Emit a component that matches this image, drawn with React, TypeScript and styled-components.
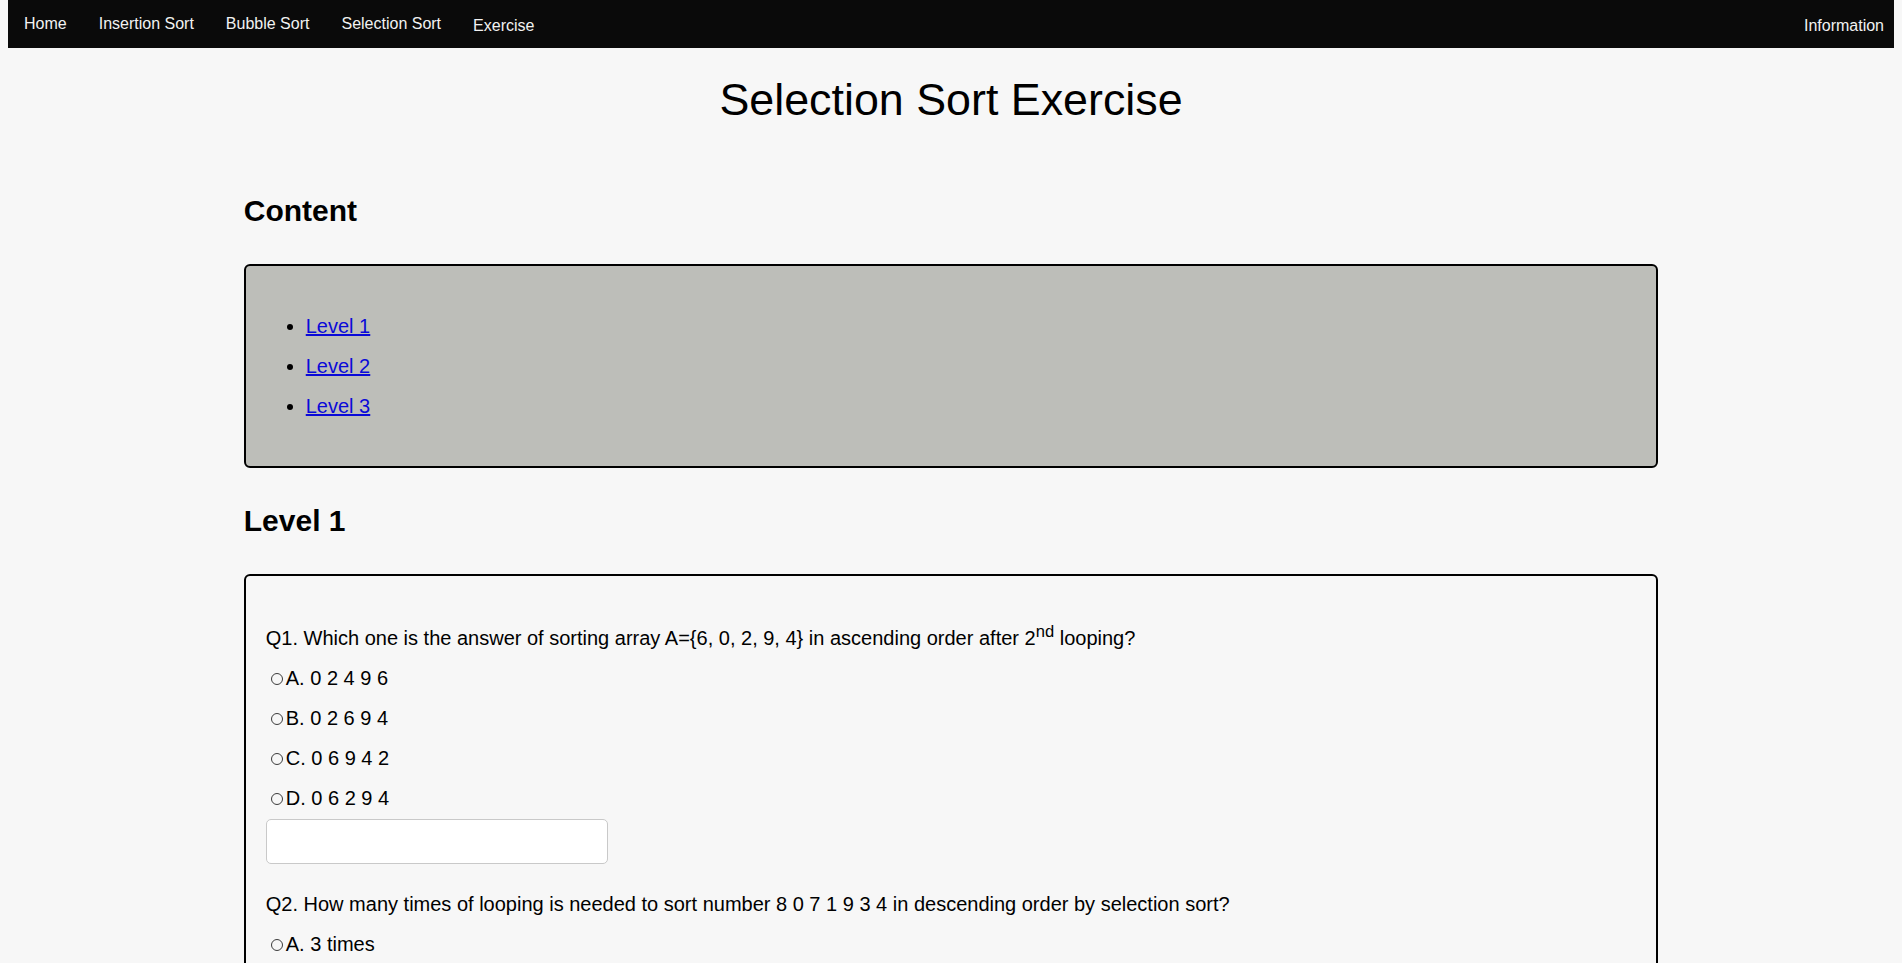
import React from "react";
import styled, { createGlobalStyle } from "styled-components";

const GlobalStyle = createGlobalStyle`
  html, body {
    background: #f7f7f7;
  }
  body {
    margin: 0 8px;
    font-family: "Liberation Sans", Arial, sans-serif;
    color: #000;
  }
`;

const TopNav = styled.nav`
  display: flex;
  align-items: stretch;
  height: 48px;
  margin-right: -8px;
  background: #0a0a0a;
`;

const NavLink = styled.a<{ $low?: boolean; $right?: boolean }>`
  display: flex;
  align-items: center;
  padding: ${(p) => (p.$low ? "4px" : "0")} ${(p) => (p.$right ? "18px" : "16px")} 0 16px;
  margin-left: ${(p) => (p.$right ? "auto" : "0")};
  font-size: 16px;
  color: #f2f2f2;
  text-decoration: none;
  cursor: pointer;
`;

const PageTitle = styled.h1`
  margin: 26px 0 69px;
  text-align: center;
  font-size: 44.8px;
  font-weight: normal;
`;

const Main = styled.main`
  width: 75%;
  margin: 0 auto;
`;

const SectionTitle = styled.h2`
  margin: 36px 0;
  font-size: 30px;
  font-weight: bold;
`;

const Panel = styled.div<{ $shaded?: boolean }>`
  border: 2px solid #000;
  border-radius: 6px;
  padding: ${(p) => (p.$shaded ? "20px" : "42px 20px 20px")};
  background: ${(p) => (p.$shaded ? "#bdbeb9" : "transparent")};
`;

const TocList = styled.ul`
  margin: 20px 0;
  padding-left: 40px;
  font-size: 20px;
  line-height: 40px;
  list-style: disc;
`;

const TocLink = styled.a`
  color: #0a0ad8;
  text-decoration: underline;
`;

const Question = styled.div`
  margin-bottom: 20px;
  font-size: 20px;
  line-height: 40px;
`;

const QuestionText = styled.p`
  margin: 0;
`;

const Sup = styled.sup`
  font-size: 0.83em;
  line-height: 0;
`;

const Option = styled.label`
  display: block;
`;

const Radio = styled.input`
  appearance: none;
  box-sizing: border-box;
  width: 12px;
  height: 12px;
  margin: 0 3px 0 5px;
  border: 1px solid #3c3c3c;
  border-radius: 50%;
  background: transparent;
  vertical-align: baseline;
`;

const AnswerInput = styled.input`
  display: block;
  box-sizing: border-box;
  width: 342px;
  height: 45px;
  margin-top: 1px;
  border: 1px solid #c9c9c9;
  border-radius: 5px;
  background: #fff;
  font-size: 16px;
  padding: 0 10px;
`;

type Q = { id: string; text: React.ReactNode; options: string[] };

const questions: Q[] = [
  {
    id: "q1",
    text: (
      <>
        Q1. Which one is the answer of sorting array A={"{"}6, 0, 2, 9, 4{"}"} in ascending order
        after 2<Sup>nd</Sup> looping?
      </>
    ),
    options: ["A. 0 2 4 9 6", "B. 0 2 6 9 4", "C. 0 6 9 4 2", "D. 0 6 2 9 4"],
  },
  {
    id: "q2",
    text: "Q2. How many times of looping is needed to sort number 8 0 7 1 9 3 4 in descending order by selection sort?",
    options: ["A. 3 times", "B. 4 times", "C. 5 times", "D. 6 times"],
  },
];

export default function App() {
  return (
    <>
      <GlobalStyle />
      <TopNav>
        <NavLink>Home</NavLink>
        <NavLink>Insertion Sort</NavLink>
        <NavLink>Bubble Sort</NavLink>
        <NavLink>Selection Sort</NavLink>
        <NavLink $low>Exercise</NavLink>
        <NavLink $low $right>
          Information
        </NavLink>
      </TopNav>
      <PageTitle>Selection Sort Exercise</PageTitle>
      <Main>
        <SectionTitle>Content</SectionTitle>
        <Panel $shaded>
          <TocList>
            <li>
              <TocLink href="#level1">Level 1</TocLink>
            </li>
            <li>
              <TocLink href="#level2">Level 2</TocLink>
            </li>
            <li>
              <TocLink href="#level3">Level 3</TocLink>
            </li>
          </TocList>
        </Panel>
        <SectionTitle id="level1">Level 1</SectionTitle>
        <Panel>
          {questions.map((q) => (
            <Question key={q.id}>
              <QuestionText>{q.text}</QuestionText>
              {q.options.map((o) => (
                <Option key={o}>
                  <Radio type="radio" name={q.id} />
                  {o}
                </Option>
              ))}
              <AnswerInput type="text" />
            </Question>
          ))}
        </Panel>
      </Main>
    </>
  );
}
